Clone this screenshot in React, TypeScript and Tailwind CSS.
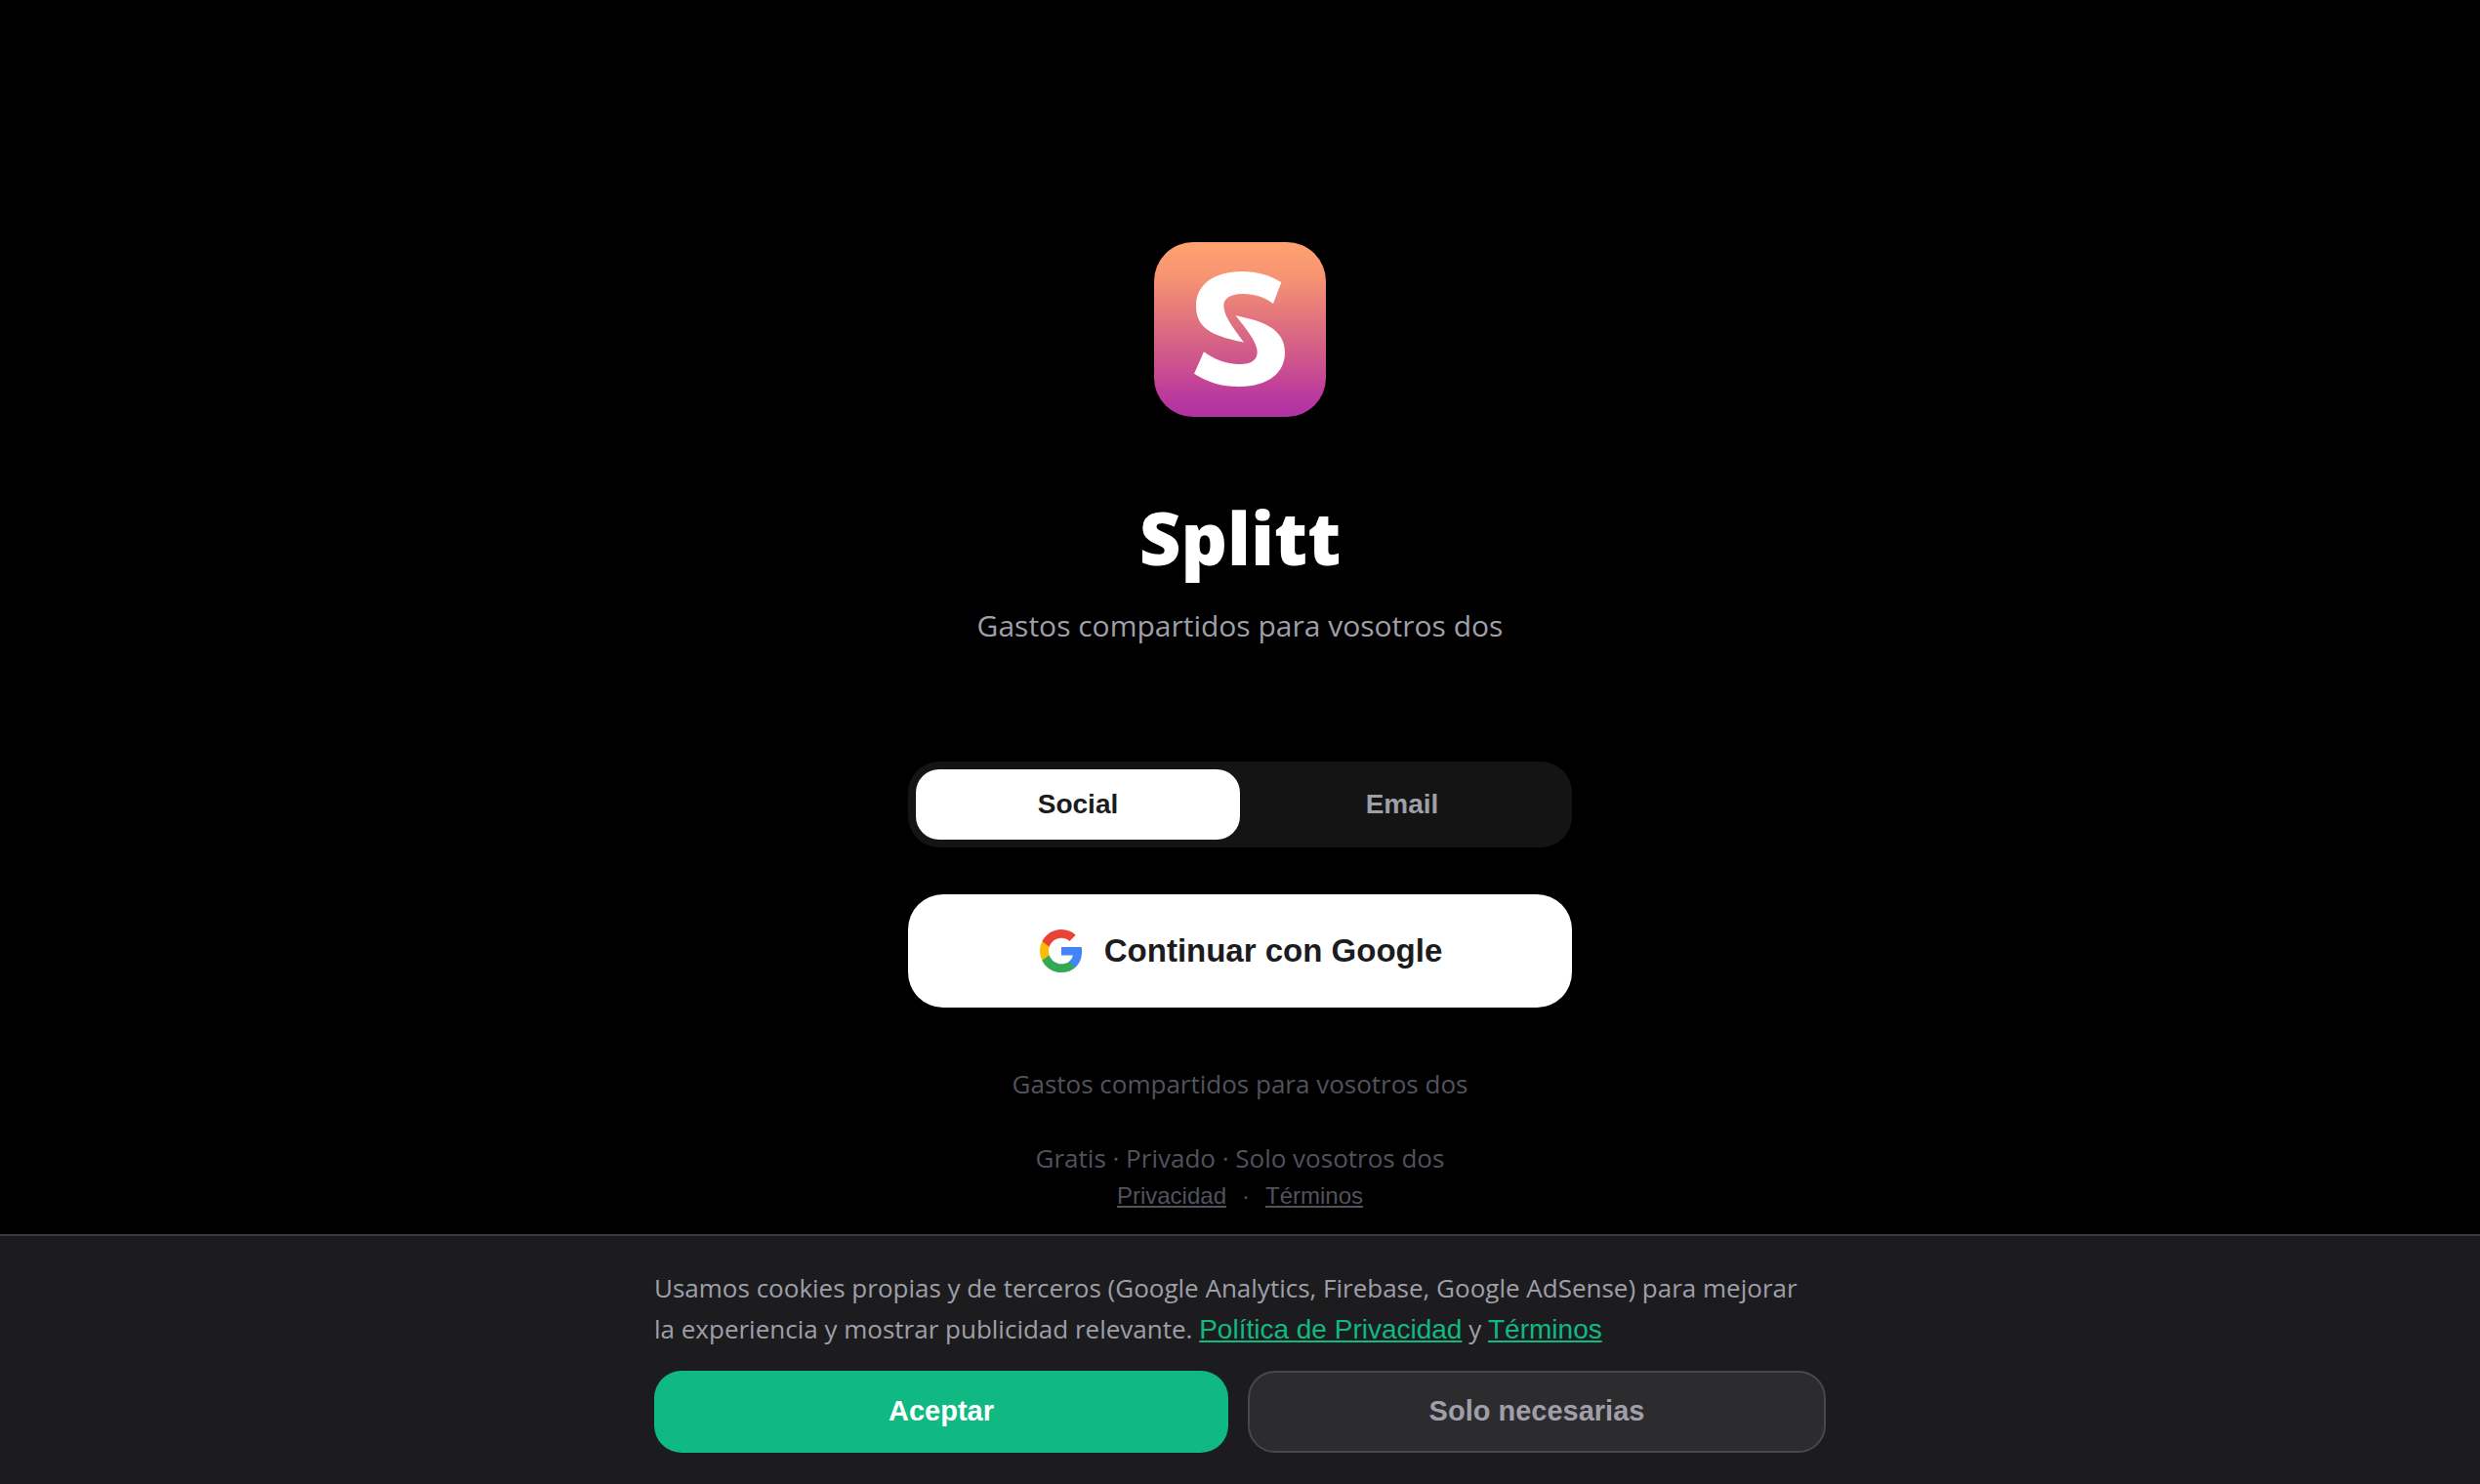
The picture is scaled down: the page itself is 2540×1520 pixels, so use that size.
import { useState } from 'react';

type Method = 'social' | 'email';

const METHODS: { id: Method; label: string }[] = [
  { id: 'social', label: 'Social' },
  { id: 'email', label: 'Email' },
];

function Logo() {
  return (
    <svg
      viewBox="66 54 528 537"
      className="h-[179px] w-44 rounded-[40px]"
      role="img"
      aria-label="Splitt"
      preserveAspectRatio="none"
    >
      <defs>
        <linearGradient id="logo-bg" x1="0" y1="0" x2="0" y2="1">
          <stop offset="0" stopColor="#ffa26e" />
          <stop offset="0.2" stopColor="#f79473" />
          <stop offset="0.5" stopColor="#dc6c80" />
          <stop offset="0.75" stopColor="#c84b92" />
          <stop offset="0.88" stopColor="#bb3a9e" />
          <stop offset="1" stopColor="#b032a3" />
        </linearGradient>
      </defs>
      <rect x="66" y="54" width="528" height="537" fill="url(#logo-bg)" />
      <path
        fill="#fff"
        d="M457 178C424 156 383 144 337 144C249 144 195 185 195 250C195 315 238 342 342 362C312 321 280 282 280 249C280 226 302 213 339 213C375 213 407 224 432 243Z"
      />
      <path
        fill="#fff"
        d="M316 280C414 297 468 328 468 393C468 458 414 498 326 498C275 498 229 484 189 458L219 391C250 415 288 429 327 429C364 429 383 416 383 392C383 362 350 321 316 280Z"
      />
    </svg>
  );
}

function GoogleIcon() {
  return (
    <svg viewBox="0 0 24 24" className="size-12 shrink-0" aria-hidden="true">
      <path
        fill="#4285F4"
        d="M22.56 12.25c0-.78-.07-1.53-.2-2.25H12v4.26h5.92c-.26 1.37-1.04 2.53-2.21 3.31v2.77h3.57c2.08-1.92 3.28-4.74 3.28-8.09z"
      />
      <path
        fill="#34A853"
        d="M12 23c2.97 0 5.46-.98 7.28-2.66l-3.57-2.77c-.98.66-2.23 1.06-3.71 1.06-2.86 0-5.29-1.93-6.16-4.53H2.18v2.84C3.99 20.53 7.7 23 12 23z"
      />
      <path
        fill="#FBBC05"
        d="M5.84 14.09c-.22-.66-.35-1.36-.35-2.09s.13-1.43.35-2.09V7.07H2.18C1.43 8.55 1 10.22 1 12s.43 3.45 1.18 4.93l2.85-2.22.81-.62z"
      />
      <path
        fill="#EA4335"
        d="M12 5.38c1.62 0 3.06.56 4.21 1.64l3.15-3.15C17.45 2.09 14.97 1 12 1 7.7 1 3.99 3.47 2.18 7.07l3.66 2.84c.87-2.6 3.3-4.53 6.16-4.53z"
      />
    </svg>
  );
}

function CookieBanner() {
  return (
    <div className="fixed inset-x-0 bottom-0 border-t-2 border-[#3a3a3c] bg-[#1c1c1e] px-8 py-8">
      <div className="mx-auto max-w-[1200px]">
        <p className="text-[26px] leading-[42px] text-zinc-400">
          <span>
            Usamos cookies propias y de terceros (Google Analytics, Firebase,
            Google AdSense) para mejorar
          </span>{' '}
          <span>
            la&nbsp;experiencia y mostrar publicidad relevante.
          </span>{' '}
          <a
            href="#privacidad"
            className="font-['Liberation_Sans',sans-serif] text-[28px] leading-none text-[#10b981] underline"
          >
            Política de Privacidad
          </a>{' '}
          y{' '}
          <a
            href="#terminos"
            className="font-['Liberation_Sans',sans-serif] text-[28px] leading-none text-[#10b981] underline"
          >
            Términos
          </a>
        </p>
        <div className="mt-[22px] flex gap-5 font-['Liberation_Sans',sans-serif] text-[29px] font-bold">
          <button
            type="button"
            className="h-[84px] flex-1 rounded-[28px] bg-[#10b981] px-6 text-white"
          >
            Aceptar
          </button>
          <button
            type="button"
            className="h-[84px] flex-1 rounded-[28px] border-2 border-[#48484a] bg-[#2c2c2e] px-6 text-zinc-400"
          >
            Solo necesarias
          </button>
        </div>
      </div>
    </div>
  );
}

export default function App() {
  const [method, setMethod] = useState<Method>('social');

  return (
    <div className="min-h-screen bg-black font-['Open_Sans',sans-serif]">
      <main className="mx-auto flex min-h-screen max-w-[680px] flex-col items-center justify-center text-center">
        <Logo />
        <h1 className="mt-20 text-[74px] leading-[88px] font-extrabold text-white">
          Splitt
        </h1>
        <p className="mt-[22px] text-[30px] leading-[48px] text-zinc-400">
          Gastos compartidos para vosotros dos
        </p>

        {/* Login method switch */}
        <div className="mt-[115px] flex w-full rounded-[32px] bg-[#141414] p-2 font-['Liberation_Sans',sans-serif] text-[28px] font-bold">
          {METHODS.map(({ id, label }) => (
            <button
              key={id}
              type="button"
              aria-pressed={method === id}
              onClick={() => setMethod(id)}
              className={
                method === id
                  ? 'h-[72px] flex-1 rounded-3xl bg-white text-[#1c1c1e]'
                  : 'h-[72px] flex-1 rounded-3xl text-zinc-400'
              }
            >
              {label}
            </button>
          ))}
        </div>

        <button
          type="button"
          className="mt-12 flex h-[116px] w-full items-center justify-center gap-5 rounded-[36px] bg-white font-['Liberation_Sans',sans-serif] text-[33px] font-bold text-[#1c1c1e]"
        >
          <GoogleIcon />
          Continuar con Google
        </button>

        <div className="mt-[58px] pb-7 text-[26px] leading-10 text-zinc-600">
          <p>Gastos compartidos para vosotros dos</p>
          <p className="mt-9">Gratis · Privado · Solo vosotros dos</p>
          <div className="flex justify-center gap-4 font-['Liberation_Sans',sans-serif] text-[24px] leading-[38px]">
            <a href="#privacidad" className="underline">
              Privacidad
            </a>
            <span>·</span>
            <a href="#terminos" className="underline">
              Términos
            </a>
          </div>
        </div>
      </main>
      <CookieBanner />
    </div>
  );
}
